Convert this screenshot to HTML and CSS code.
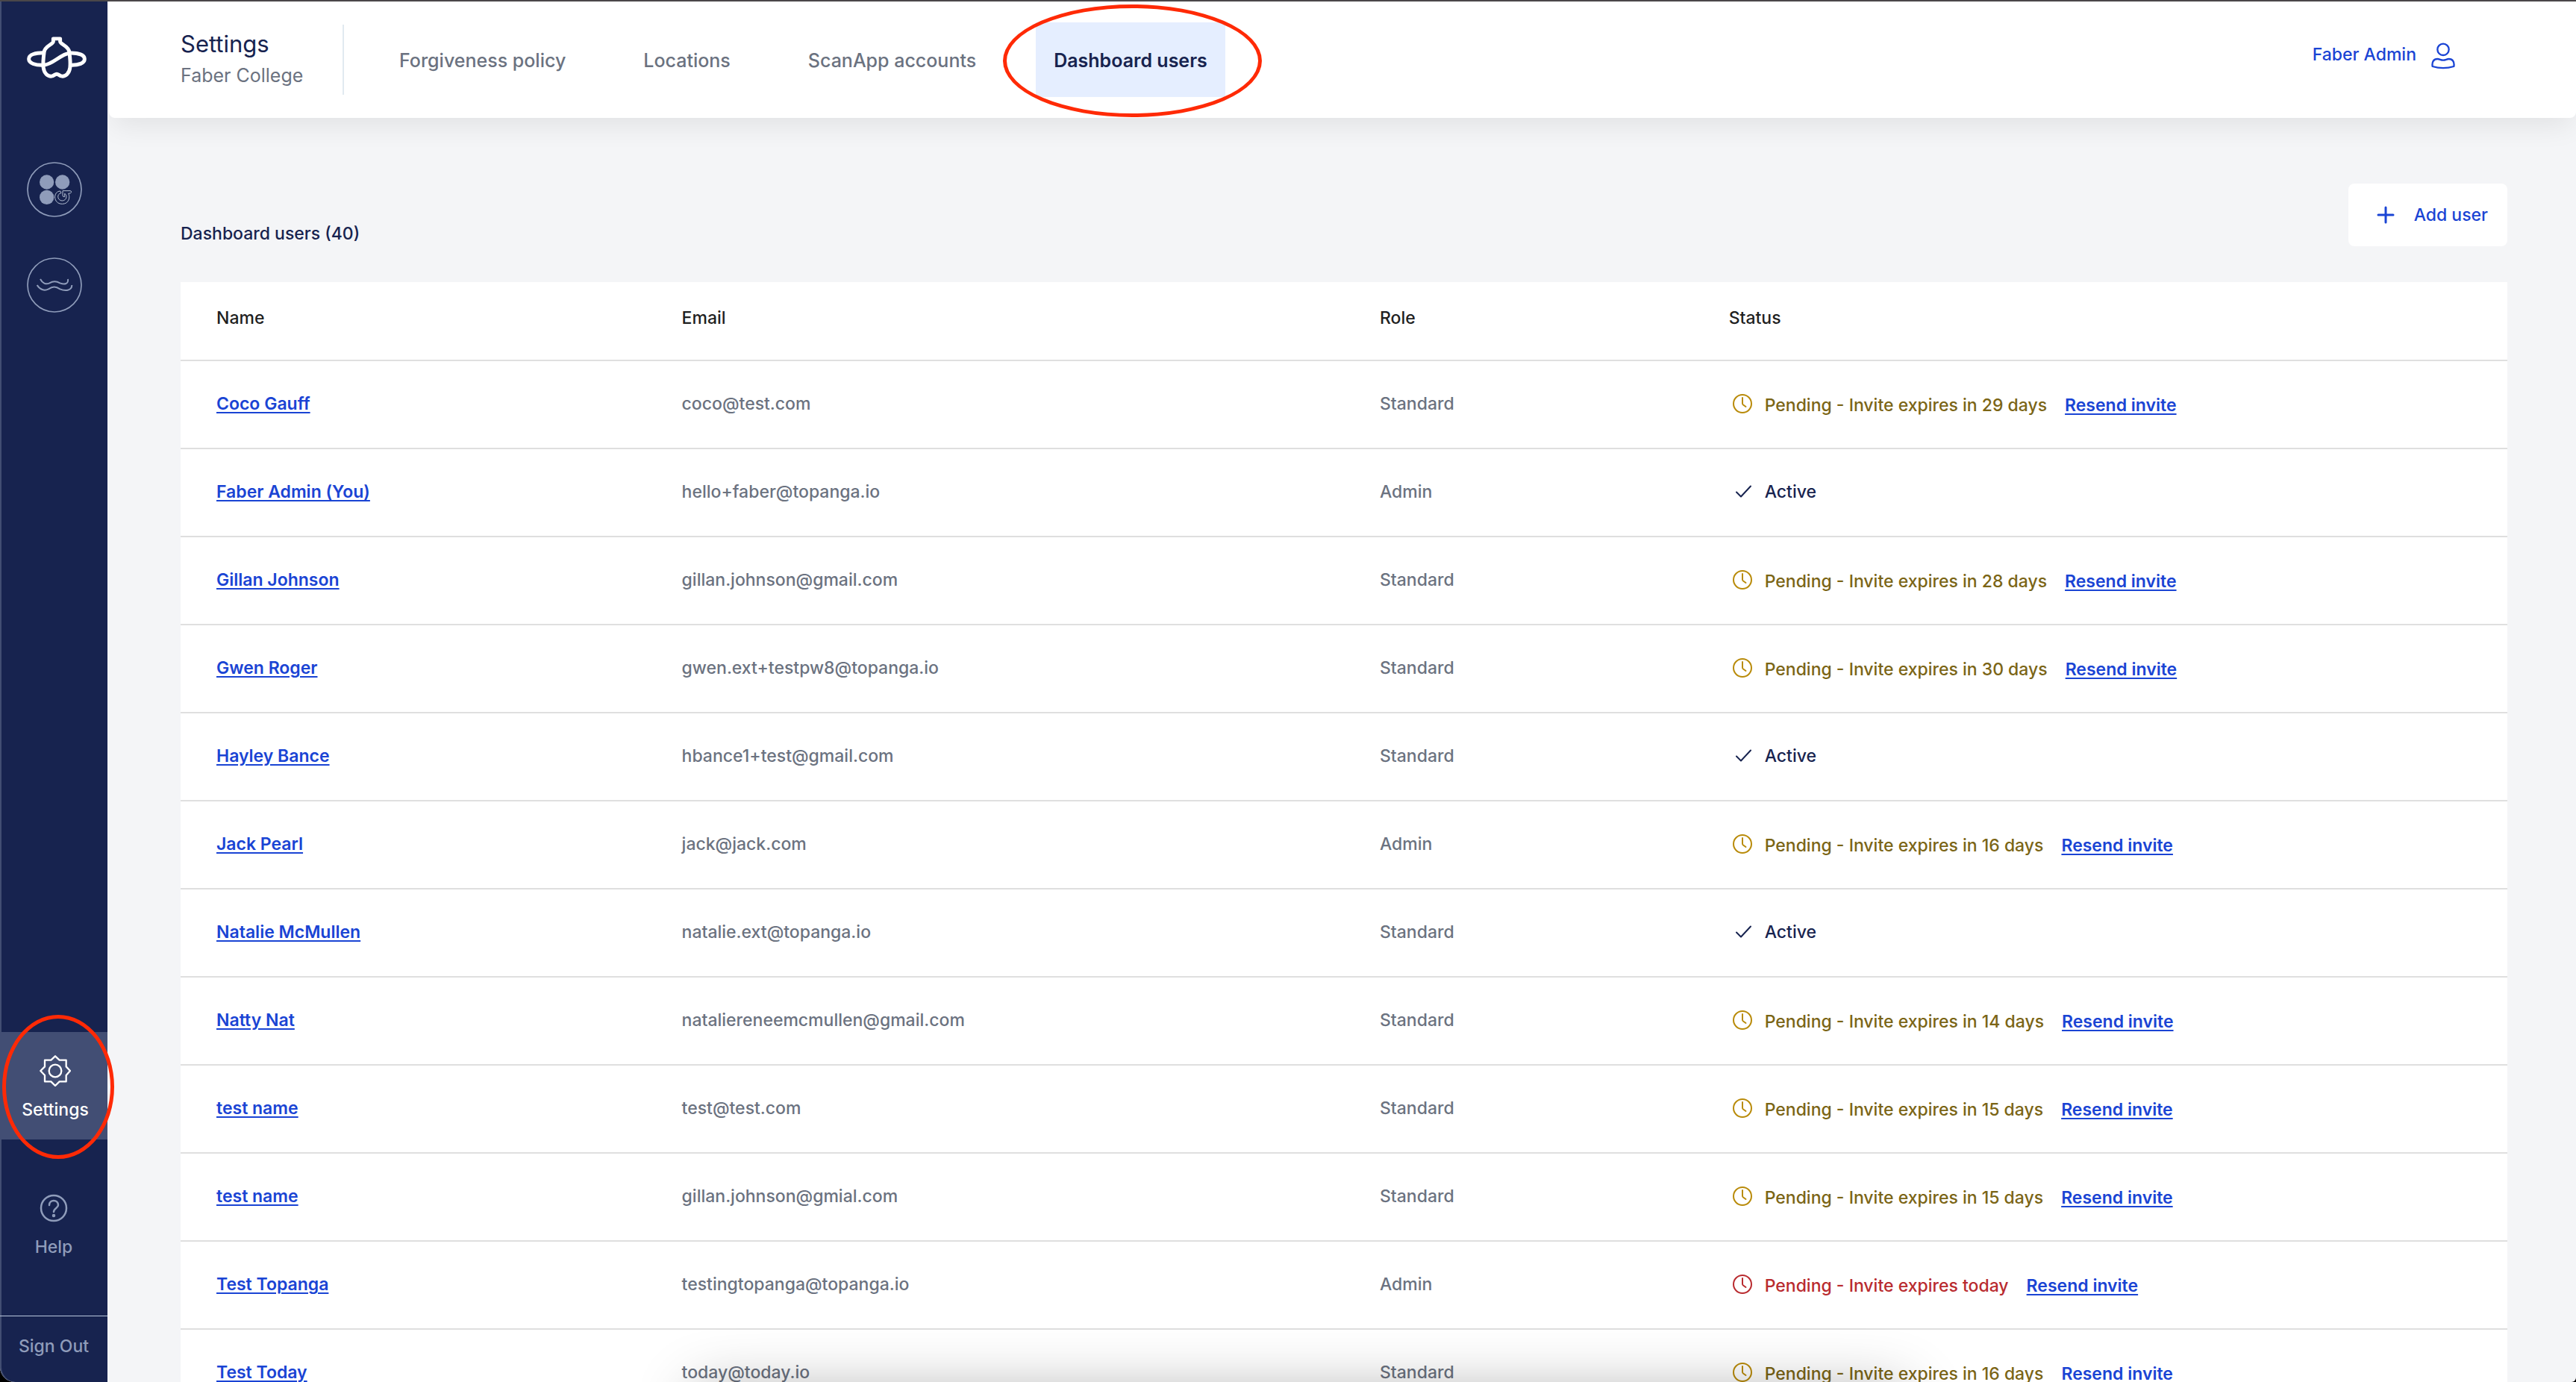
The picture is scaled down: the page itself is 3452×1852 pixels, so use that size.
FILE: index.html
```
<!DOCTYPE html>
<html lang="en">
<head>
	<meta charset="utf-8">
	<title>Settings - Dashboard users</title>
	<link rel="stylesheet" href="styles.css">
</head>
<body>
	<!-- shared icons -->
	<svg class="sprite" aria-hidden="true">
		<symbol id="clock" viewBox="0 0 26 26">
			<circle cx="13" cy="13" r="12" fill="none" stroke="currentColor" stroke-width="2"/>
			<path d="M13 5v7.500q0 1.200 1 2l3.500 2.500" fill="none" stroke="currentColor" stroke-width="2" stroke-linecap="round"/>
		</symbol>
		<symbol id="check" viewBox="0 0 26 26">
			<path d="M5 13.500l6 6L24 5.500" fill="none" stroke="currentColor" stroke-width="2" stroke-linecap="round" stroke-linejoin="round"/>
		</symbol>
	</svg>

	<div class="page">
		<aside class="sidebar">
			<a class="logo" href="#" aria-label="Home">
				<svg viewBox="104 144 248 174" fill="none" stroke="#fff" stroke-width="15" stroke-linejoin="round">
					<path d="M214 155h28v12c2 11 35 18 37 42 3 22 5 45 3 63-3 24-18 36-33 35-10-1-14-9-21-9s-11 8-21 9c-15 1-30-11-33-35-2-18 0-41 3-63 2-24 35-31 37-42z"/>
					<path d="M178 212c-35-1-63 7-63 25 0 17 26 27 61 25 38-3 66-44 106-49 35-1 59 8 59 24 0 17-24 26-56 25"/>
				</svg>
			</a>
			<a class="product" href="#" aria-label="Reusables">
				<svg viewBox="108 651 222 222">
					<circle cx="219" cy="762" r="108" fill="none" stroke="#8f9cba" stroke-width="5"/>
					<g fill="#8f9cba"><circle cx="188" cy="732" r="29"/><circle cx="251" cy="732" r="29"/><circle cx="188" cy="793" r="29"/></g>
					<path d="M252 767h30q6 1 5 6-2 5-12 5c8 15 2 42-25 42-37 0-38-50-8-52l4 8c-20 4-15 31 4 31 18 0 22-23 10-29v13q-7 2-8-5z" fill="none" stroke="#b4bfd3" stroke-width="3"/>
				</svg>
			</a>
			<a class="product" href="#" aria-label="Stream">
				<svg viewBox="108 1035 222 222" fill="none" stroke="#8f9cba" stroke-width="5">
					<circle cx="219" cy="1146" r="108"/>
					<path d="M162 1122c8 15 22 24 37 16 14-8 26-9 42 0 19 7 35 4 32-16M149 1146c11 18 29 25 46 16 17-11 29-11 46 0 21 9 48 7 48-16" stroke-width="6"/>
				</svg>
			</a>

			<a class="side-item active" href="#">
				<svg viewBox="159 222 126 126" fill="none" stroke="currentColor" stroke-width="7" stroke-linejoin="round">
					<path d="M222 226l17 16h27v26l16 17-16 18v25h-27l-17 17-17-17h-25v-25l-17-18 17-17v-26h25z"/>
					<circle cx="222" cy="285" r="25"/>
				</svg>
				<span>Settings</span>
				<i class="ring"></i>
			</a>
			<a class="side-item help" href="#">
				<svg viewBox="0 0 42 42" fill="none" stroke="currentColor" stroke-width="2.500" stroke-linecap="round">
					<circle cx="21" cy="21" r="17"/>
					<path d="M15 17c0-8 12-8 12 0 0 4-6 4-6 9"/>
					<circle cx="21" cy="31" r="1"/>
				</svg>
				<span>Help</span>
			</a>
			<a class="signout" href="#">Sign Out</a>
		</aside>

		<div class="main">
			<header class="topbar">
				<div class="heading">
					<h1>Settings</h1>
					<p>Faber College</p>
				</div>
				<nav class="tabs">
					<a href="#">Forgiveness policy</a>
					<a href="#">Locations</a>
					<a href="#">ScanApp accounts</a>
					<a class="active" href="#">Dashboard users<i class="ring"></i></a>
				</nav>
				<a class="account" href="#">
					<span>Faber Admin</span>
					<svg viewBox="774 176 96 108" fill="none" stroke="currentColor" stroke-width="7">
						<circle cx="822" cy="204" r="23"/>
						<path d="M779 272c-3-18 5-30 20-30 9 0 13 5 23 5s14-5 23-5c15 0 23 12 20 30-26 8-60 8-86 0z" stroke-linejoin="round"/>
					</svg>
				</a>
			</header>

			<main class="content">
				<div class="toolbar">
					<h2>Dashboard users (40)</h2>
					<button class="add" type="button">
						<svg viewBox="0 0 24 24" stroke="currentColor" stroke-width="3" stroke-linecap="round"><path d="M12 2v20M2 12h20"/></svg>
						Add user
					</button>
				</div>

				<table class="users">
					<thead>
						<tr><th class="col-name">Name</th><th class="col-email">Email</th><th class="col-role">Role</th><th>Status</th></tr>
					</thead>
					<tbody>
						<tr>
							<td><a href="#">Coco Gauff</a></td><td>coco@test.com</td><td>Standard</td>
							<td><div class="status pending"><svg><use href="#clock"/></svg><span>Pending - Invite expires in 29 days</span><a href="#">Resend invite</a></div></td>
						</tr>
						<tr>
							<td><a href="#">Faber Admin (You)</a></td><td>hello+faber@topanga.io</td><td>Admin</td>
							<td><div class="status"><svg><use href="#check"/></svg><span>Active</span></div></td>
						</tr>
						<tr>
							<td><a href="#">Gillan Johnson</a></td><td>gillan.johnson@gmail.com</td><td>Standard</td>
							<td><div class="status pending"><svg><use href="#clock"/></svg><span>Pending - Invite expires in 28 days</span><a href="#">Resend invite</a></div></td>
						</tr>
						<tr>
							<td><a href="#">Gwen Roger</a></td><td>gwen.ext+testpw8@topanga.io</td><td>Standard</td>
							<td><div class="status pending"><svg><use href="#clock"/></svg><span>Pending - Invite expires in 30 days</span><a href="#">Resend invite</a></div></td>
						</tr>
						<tr>
							<td><a href="#">Hayley Bance</a></td><td>hbance1+test@gmail.com</td><td>Standard</td>
							<td><div class="status"><svg><use href="#check"/></svg><span>Active</span></div></td>
						</tr>
						<tr>
							<td><a href="#">Jack Pearl</a></td><td>jack@jack.com</td><td>Admin</td>
							<td><div class="status pending"><svg><use href="#clock"/></svg><span>Pending - Invite expires in 16 days</span><a href="#">Resend invite</a></div></td>
						</tr>
						<tr>
							<td><a href="#">Natalie McMullen</a></td><td>natalie.ext@topanga.io</td><td>Standard</td>
							<td><div class="status"><svg><use href="#check"/></svg><span>Active</span></div></td>
						</tr>
						<tr>
							<td><a href="#">Natty Nat</a></td><td>nataliereneemcmullen@gmail.com</td><td>Standard</td>
							<td><div class="status pending"><svg><use href="#clock"/></svg><span>Pending - Invite expires in 14 days</span><a href="#">Resend invite</a></div></td>
						</tr>
						<tr>
							<td><a href="#">test name</a></td><td>test@test.com</td><td>Standard</td>
							<td><div class="status pending"><svg><use href="#clock"/></svg><span>Pending - Invite expires in 15 days</span><a href="#">Resend invite</a></div></td>
						</tr>
						<tr>
							<td><a href="#">test name</a></td><td>gillan.johnson@gmial.com</td><td>Standard</td>
							<td><div class="status pending"><svg><use href="#clock"/></svg><span>Pending - Invite expires in 15 days</span><a href="#">Resend invite</a></div></td>
						</tr>
						<tr>
							<td><a href="#">Test Topanga</a></td><td>testingtopanga@topanga.io</td><td>Admin</td>
							<td><div class="status pending today"><svg><use href="#clock"/></svg><span>Pending - Invite expires today</span><a href="#">Resend invite</a></div></td>
						</tr>
						<tr>
							<td><a href="#">Test Today</a></td><td>today@today.io</td><td>Standard</td>
							<td><div class="status pending"><svg><use href="#clock"/></svg><span>Pending - Invite expires in 16 days</span><a href="#">Resend invite</a></div></td>
						</tr>
					</tbody>
				</table>
			</main>
		</div>
		<div class="dock-shadow"></div>
	</div>
</body>
</html>
```

FILE: styles.css
```
*{
	box-sizing: border-box;
}
body{
	margin: 0;
	background-color: #000;
	font-family: Inter, "Open Sans", sans-serif;
	font-size: 23px;
	font-weight: 500;
	line-height: 32px;
	color: #6b7280;
}
h1, h2, p{
	margin: 0;
}
a{
	color: #1a44d4;
}
.sprite{
	display: none;
}
.page{
	position: relative;
	display: flex;
	height: 100vh;
	overflow: hidden;
	border-top: 2px solid #4a4749;
	border-bottom-left-radius: 20px;
	border-bottom-right-radius: 6px;
	background-color: #f4f5f7;
}

/* red highlight */
.ring{
	position: absolute;
	border: 5px solid #ff2a06;
	border-radius: 50%;
}

/* sidebar */
.sidebar{
	position: relative;
	z-index: 2;
	display: flex;
	flex-direction: column;
	align-items: center;
	flex: 0 0 144px;
	padding-top: 46px;
	background-color: #17234f;
	box-shadow: inset 2px 0 #424e72;
	border-bottom-left-radius: 20px;
}
.sidebar svg{
	display: block;
}
.logo svg{
	width: 82px;
	height: 58px;
}
.logo{
	margin: 0 0 111px 8px;
}
.product{
	margin: 0 0 54px 2px;
}
.product svg{
	width: 74px;
	height: 74px;
}
.side-item{
	position: relative;
	display: flex;
	flex-direction: column;
	align-items: center;
	gap: 20px;
	width: 100%;
	height: 144px;
	padding-top: 31px;
	color: #8f9cba;
	line-height: 22px;
	text-decoration: none;
}
.side-item svg{
	width: 42px;
	height: 42px;
}
.side-item.active{
	margin-top: auto;
	padding-left: 4px;
	background-color: #424e74;
	color: #fff;
}
.side-item .ring{
	top: -23px;
	right: -9px;
	bottom: -26px;
	left: 3px;
}
.help{
	margin: 40px 0 52px;
}
.signout{
	width: 100%;
	height: 89px;
	padding-top: 24px;
	border-top: 1px solid #b9c6dc;
	color: #8f9cba;
	text-align: center;
	text-decoration: none;
}

/* top bar */
.main{
	flex: 1;
	min-width: 0;
}
.topbar{
	display: flex;
	align-items: center;
	height: 156px;
	margin-left: 2px;
	padding: 0 162px 0 96px;
	background-color: #fff;
	border-radius: 0 0 8px 8px;
	box-shadow: 0 16px 36px -6px rgba(0, 0, 0, .08);
}
.heading{
	width: 219px;
	padding: 5px 0;
	border-right: 2px solid #e1eaf0;
	line-height: 42px;
}
.heading h1{
	font-size: 31px;
	font-weight: 400;
	color: #17234f;
}
.heading p{
	font-size: 25px;
	font-weight: 400;
}
.tabs{
	display: flex;
	gap: 56px;
	margin-left: 50px;
	font-size: 25px;
}
.tabs a{
	position: relative;
	padding: 35px 24px 33px;
	color: #6b7280;
	text-decoration: none;
}
.tabs .active{
	background-color: #e5eeff;
	color: #17234f;
	font-weight: 600;
}
.tabs .ring{
	top: -24px;
	right: -49px;
	bottom: -27px;
	left: -44px;
}
.account{
	display: flex;
	gap: 20px;
	margin: 0 0 10px auto;
	text-decoration: none;
}
.account svg{
	width: 32px;
	height: 36px;
}

/* content */
.content{
	padding: 88px 92px 0 98px;
}
.toolbar{
	display: flex;
	justify-content: space-between;
	margin-bottom: 48px;
}
.toolbar h2{
	padding-top: 51px;
	font-size: 23px;
	font-weight: 500;
	line-height: 32px;
	color: #17234f;
}
.add{
	display: flex;
	align-items: center;
	gap: 26px;
	height: 84px;
	padding: 0 26px 0 38px;
	border: none;
	border-radius: 8px;
	background-color: #fff;
	color: #1a44d4;
	font: inherit;
}
.add svg{
	width: 24px;
	height: 24px;
}
.users{
	width: 100%;
	table-layout: fixed;
	border-spacing: 0;
	background-color: #fff;
}
.users th, .users td{
	padding: 0 0 2px 48px;
	border-bottom: 2px solid #dfdfdf;
	text-align: left;
	white-space: nowrap;
}
.users th{
	height: 106px;
	padding-bottom: 8px;
	font-weight: 500;
	color: #1f1f1f;
}
.users td{
	height: 118px;
}
.users a{
	font-weight: 600;
	text-underline-offset: 3px;
	text-decoration-thickness: 2px;
}
.col-name{
	width: 20%;
}
.col-email{
	width: 30%;
}
.col-role{
	width: 15%;
}
.status{
	display: flex;
	align-items: center;
	padding-left: 5px;
	color: #17234f;
}
.status svg{
	width: 26px;
	height: 26px;
	margin-right: 17px;
}
.status a{
	margin-left: 24px;
}
.pending{
	color: #7b6516;
}
.pending svg{
	color: #b98b0a;
}
.pending span, .pending a{
	padding-top: 4px;
}
.today, .today svg{
	color: #b92b2f;
}

/* shade that rises from the bottom edge */
.dock-shadow{
	position: absolute;
	top: 100%;
	right: 26%;
	left: 27%;
	height: 100px;
	box-shadow: 0 10px 80px rgba(0, 0, 0, .3);
}
```
